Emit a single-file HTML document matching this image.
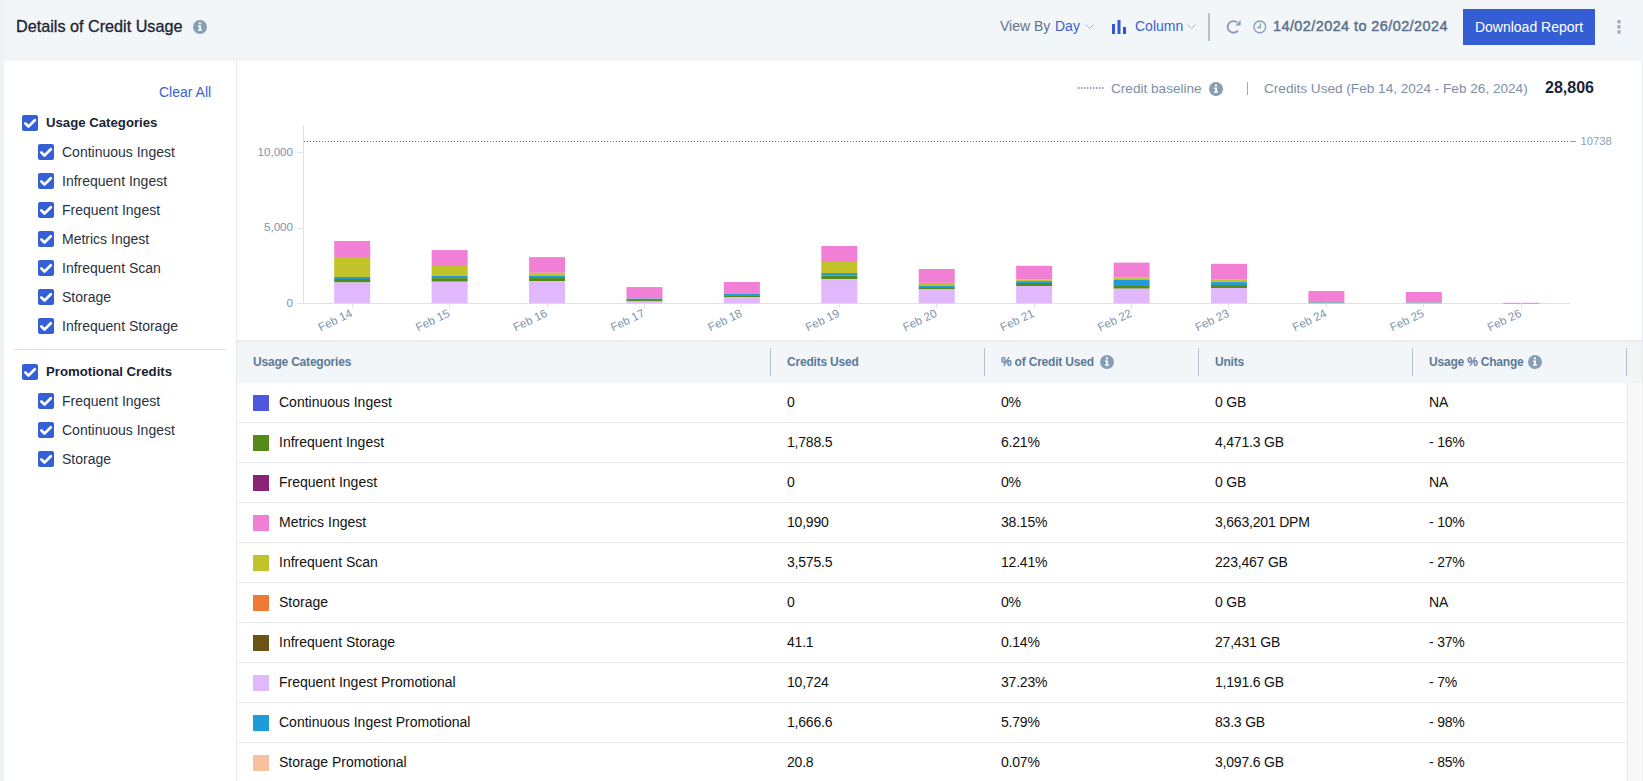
<!DOCTYPE html>
<html><head><meta charset="utf-8">
<style>
*{box-sizing:border-box;margin:0;padding:0}
html,body{width:1643px;height:781px;overflow:hidden;background:#fff;font-family:"Liberation Sans",sans-serif;position:relative}
.a{position:absolute}
.strip{left:0;top:0;width:4px;height:781px;background:#eef2f4}
.hdr{left:4px;top:0;width:1639px;height:57px;background:#f3f6f9}
.hband{left:4px;top:57px;width:1639px;height:4px;background:#f3f4f5}
.title{left:16px;top:16px;font-size:16.2px;color:#1b2333;-webkit-text-stroke:0.3px #1b2333;white-space:nowrap;line-height:20px}
.t14{font-size:14px;white-space:nowrap;line-height:16px}
.btn{left:1463px;top:9px;width:132px;height:36px;background:#355ed4;color:#fff;font-size:14px;line-height:36px;text-align:center}
.side{left:4px;top:61px;width:232px;height:720px;background:#fff}
.sideborder{left:236px;top:61px;width:1px;height:720px;background:#e6eaee}
.cb{width:16px;height:16px;background:#3560d5;border-radius:2px}
.cb svg{position:absolute;left:0;top:0}
.lbl{font-size:14px;color:#2a3240;white-space:nowrap;line-height:16px}
.lblb{font-size:13.2px;font-weight:bold;color:#1b2333;white-space:nowrap;line-height:16px}
.th{font-size:12px;font-weight:bold;color:#5b7a99;white-space:nowrap;line-height:16px;letter-spacing:-0.2px}
.td{font-size:14px;color:#111;white-space:nowrap;line-height:16px}
</style></head><body>
<div class="a strip"></div>
<div class="a hdr"></div>
<div class="a hband"></div>
<div class="a title">Details of Credit Usage</div>
<svg class="a" style="left:193px;top:20px" width="14" height="14" viewBox="0 0 14 14"><circle cx="7" cy="7" r="7" fill="#889db6"/><path d="M5 5.5 H8 V9.2 H8.9 V10.7 H5 V9.2 H6.2 V6.9 H5 Z" fill="#fff"/><circle cx="6.9" cy="3.4" r="1.15" fill="#fff"/></svg>

<!-- toolbar -->
<div class="a t14" style="left:1000px;top:18px;color:#5f7388">View By</div>
<div class="a t14" style="left:1055px;top:18px;color:#3a5fd6">Day</div>
<svg class="a" style="left:1085px;top:24px" width="9" height="6" viewBox="0 0 9 6"><path d="M0.5 0.5 L4.5 4.5 L8.5 0.5" stroke="#a9b6c4" fill="none" stroke-width="1"/></svg>
<svg class="a" style="left:1112px;top:20px" width="14" height="14" viewBox="0 0 14 14"><rect x="0" y="4" width="3" height="10" fill="#3358d4"/><rect x="5.5" y="0" width="3" height="14" fill="#3358d4"/><rect x="11" y="7" width="3" height="7" fill="#3358d4"/></svg>
<div class="a t14" style="left:1135px;top:18px;color:#3a5fd6">Column</div>
<svg class="a" style="left:1187px;top:24px" width="9" height="6" viewBox="0 0 9 6"><path d="M0.5 0.5 L4.5 4.5 L8.5 0.5" stroke="#a9b6c4" fill="none" stroke-width="1"/></svg>
<div class="a" style="left:1208px;top:13px;width:2px;height:28px;background:#b4c2d0"></div>
<svg class="a" style="left:1226px;top:19px" width="16" height="16" viewBox="0 0 16 16"><path d="M11.94 11.58 A5.8 5.8 0 1 1 11.3 3.6" stroke="#8a9db5" stroke-width="1.8" fill="none"/><path d="M14.6 1.1 L14.6 6.6 L9.4 6.6 Z" fill="#8a9db5"/></svg>
<svg class="a" style="left:1253px;top:20px" width="14" height="14" viewBox="0 0 14 14"><circle cx="6.8" cy="6.85" r="5.9" stroke="#8a9db5" stroke-width="1.4" fill="none"/><path d="M7.4 3.3 V7.5 H4.2" stroke="#8a9db5" stroke-width="1.3" fill="none"/></svg>
<div class="a t14" style="left:1273px;top:18px;color:#5a7088;font-size:14.5px;letter-spacing:0.4px;-webkit-text-stroke:0.45px #5a7088">14/02/2024 to 26/02/2024</div>
<div class="a btn">Download Report</div>
<svg class="a" style="left:1616px;top:19px" width="6" height="16" viewBox="0 0 6 16"><circle cx="3" cy="2.7" r="1.9" fill="#9dafc0"/><circle cx="3" cy="7.8" r="1.9" fill="#9dafc0"/><circle cx="3" cy="13" r="1.9" fill="#9dafc0"/></svg>

<!-- sidebar -->
<div class="a side"></div>
<div class="a sideborder"></div>
<div class="a t14" style="left:159px;top:84px;color:#3a62d6">Clear All</div>
<div class="a cb" style="left:22px;top:115px"><svg width="16" height="16" viewBox="0 0 16 16"><path d="M3.4 8.5 L6.5 11.5 L12.8 5.2" stroke="#fff" stroke-width="2.7" fill="none" stroke-linecap="round" stroke-linejoin="round"/></svg></div>
<div class="a lblb" style="left:46px;top:115px">Usage Categories</div>
<div class="a cb" style="left:38px;top:144px"><svg width="16" height="16" viewBox="0 0 16 16"><path d="M3.4 8.5 L6.5 11.5 L12.8 5.2" stroke="#fff" stroke-width="2.7" fill="none" stroke-linecap="round" stroke-linejoin="round"/></svg></div>
<div class="a lbl" style="left:62px;top:144px">Continuous Ingest</div>
<div class="a cb" style="left:38px;top:173px"><svg width="16" height="16" viewBox="0 0 16 16"><path d="M3.4 8.5 L6.5 11.5 L12.8 5.2" stroke="#fff" stroke-width="2.7" fill="none" stroke-linecap="round" stroke-linejoin="round"/></svg></div>
<div class="a lbl" style="left:62px;top:173px">Infrequent Ingest</div>
<div class="a cb" style="left:38px;top:202px"><svg width="16" height="16" viewBox="0 0 16 16"><path d="M3.4 8.5 L6.5 11.5 L12.8 5.2" stroke="#fff" stroke-width="2.7" fill="none" stroke-linecap="round" stroke-linejoin="round"/></svg></div>
<div class="a lbl" style="left:62px;top:202px">Frequent Ingest</div>
<div class="a cb" style="left:38px;top:231px"><svg width="16" height="16" viewBox="0 0 16 16"><path d="M3.4 8.5 L6.5 11.5 L12.8 5.2" stroke="#fff" stroke-width="2.7" fill="none" stroke-linecap="round" stroke-linejoin="round"/></svg></div>
<div class="a lbl" style="left:62px;top:231px">Metrics Ingest</div>
<div class="a cb" style="left:38px;top:260px"><svg width="16" height="16" viewBox="0 0 16 16"><path d="M3.4 8.5 L6.5 11.5 L12.8 5.2" stroke="#fff" stroke-width="2.7" fill="none" stroke-linecap="round" stroke-linejoin="round"/></svg></div>
<div class="a lbl" style="left:62px;top:260px">Infrequent Scan</div>
<div class="a cb" style="left:38px;top:289px"><svg width="16" height="16" viewBox="0 0 16 16"><path d="M3.4 8.5 L6.5 11.5 L12.8 5.2" stroke="#fff" stroke-width="2.7" fill="none" stroke-linecap="round" stroke-linejoin="round"/></svg></div>
<div class="a lbl" style="left:62px;top:289px">Storage</div>
<div class="a cb" style="left:38px;top:318px"><svg width="16" height="16" viewBox="0 0 16 16"><path d="M3.4 8.5 L6.5 11.5 L12.8 5.2" stroke="#fff" stroke-width="2.7" fill="none" stroke-linecap="round" stroke-linejoin="round"/></svg></div>
<div class="a lbl" style="left:62px;top:318px">Infrequent Storage</div>
<div class="a" style="left:14px;top:349px;width:212px;height:1px;background:#dde3ea"></div>
<div class="a cb" style="left:22px;top:364px"><svg width="16" height="16" viewBox="0 0 16 16"><path d="M3.4 8.5 L6.5 11.5 L12.8 5.2" stroke="#fff" stroke-width="2.7" fill="none" stroke-linecap="round" stroke-linejoin="round"/></svg></div>
<div class="a lblb" style="left:46px;top:364px">Promotional Credits</div>
<div class="a cb" style="left:38px;top:393px"><svg width="16" height="16" viewBox="0 0 16 16"><path d="M3.4 8.5 L6.5 11.5 L12.8 5.2" stroke="#fff" stroke-width="2.7" fill="none" stroke-linecap="round" stroke-linejoin="round"/></svg></div>
<div class="a lbl" style="left:62px;top:393px">Frequent Ingest</div>
<div class="a cb" style="left:38px;top:422px"><svg width="16" height="16" viewBox="0 0 16 16"><path d="M3.4 8.5 L6.5 11.5 L12.8 5.2" stroke="#fff" stroke-width="2.7" fill="none" stroke-linecap="round" stroke-linejoin="round"/></svg></div>
<div class="a lbl" style="left:62px;top:422px">Continuous Ingest</div>
<div class="a cb" style="left:38px;top:451px"><svg width="16" height="16" viewBox="0 0 16 16"><path d="M3.4 8.5 L6.5 11.5 L12.8 5.2" stroke="#fff" stroke-width="2.7" fill="none" stroke-linecap="round" stroke-linejoin="round"/></svg></div>
<div class="a lbl" style="left:62px;top:451px">Storage</div>
<svg class="a" style="left:0;top:0" width="1643" height="781" viewBox="0 0 1643 781" shape-rendering="crispEdges">
<rect x="303" y="125" width="1" height="178.5" fill="#dde3ea"/>
<rect x="298" y="302.8" width="1272" height="1" fill="#dde3ea"/>
<rect x="298" y="152.0" width="5" height="1" fill="#dde3ea"/>
<rect x="298" y="227.5" width="5" height="1" fill="#dde3ea"/>
<rect x="334.21" y="241.00" width="36" height="16.00" fill="#f27fd6" shape-rendering="auto"/>
<rect x="334.21" y="257.00" width="36" height="20.00" fill="#c2c22b" shape-rendering="auto"/>
<rect x="334.21" y="277.00" width="36" height="2.00" fill="#1f9bd7" shape-rendering="auto"/>
<rect x="334.21" y="279.00" width="36" height="3.40" fill="#558b1a" shape-rendering="auto"/>
<rect x="334.21" y="282.40" width="36" height="20.90" fill="#e0b8fb" shape-rendering="auto"/>
<rect x="351.71" y="303.3" width="1" height="4.5" fill="#dde3ea"/>
<text x="353.21" y="316" transform="rotate(-25.5 353.21 316)" text-anchor="end" font-size="11.6" fill="#7d93ad" font-family="Liberation Sans">Feb 14</text>
<rect x="431.63" y="250.10" width="36" height="15.90" fill="#f27fd6" shape-rendering="auto"/>
<rect x="431.63" y="266.00" width="36" height="9.80" fill="#c2c22b" shape-rendering="auto"/>
<rect x="431.63" y="275.80" width="36" height="2.30" fill="#1f9bd7" shape-rendering="auto"/>
<rect x="431.63" y="278.10" width="36" height="3.60" fill="#558b1a" shape-rendering="auto"/>
<rect x="431.63" y="281.70" width="36" height="21.60" fill="#e0b8fb" shape-rendering="auto"/>
<rect x="449.13" y="303.3" width="1" height="4.5" fill="#dde3ea"/>
<text x="450.63" y="316" transform="rotate(-25.5 450.63 316)" text-anchor="end" font-size="11.6" fill="#7d93ad" font-family="Liberation Sans">Feb 15</text>
<rect x="529.05" y="257.10" width="36" height="15.70" fill="#f27fd6" shape-rendering="auto"/>
<rect x="529.05" y="272.80" width="36" height="3.20" fill="#c2c22b" shape-rendering="auto"/>
<rect x="529.05" y="276.00" width="36" height="2.00" fill="#1f9bd7" shape-rendering="auto"/>
<rect x="529.05" y="278.00" width="36" height="3.30" fill="#558b1a" shape-rendering="auto"/>
<rect x="529.05" y="281.30" width="36" height="22.00" fill="#e0b8fb" shape-rendering="auto"/>
<rect x="546.55" y="303.3" width="1" height="4.5" fill="#dde3ea"/>
<text x="548.05" y="316" transform="rotate(-25.5 548.05 316)" text-anchor="end" font-size="11.6" fill="#7d93ad" font-family="Liberation Sans">Feb 16</text>
<rect x="626.47" y="287.10" width="36" height="11.50" fill="#f27fd6" shape-rendering="auto"/>
<rect x="626.47" y="298.60" width="36" height="1.40" fill="#1f9bd7" shape-rendering="auto"/>
<rect x="626.47" y="300.00" width="36" height="1.00" fill="#558b1a" shape-rendering="auto"/>
<rect x="626.47" y="301.00" width="36" height="2.30" fill="#e0b8fb" shape-rendering="auto"/>
<rect x="643.97" y="303.3" width="1" height="4.5" fill="#dde3ea"/>
<text x="645.47" y="316" transform="rotate(-25.5 645.47 316)" text-anchor="end" font-size="11.6" fill="#7d93ad" font-family="Liberation Sans">Feb 17</text>
<rect x="723.89" y="282.00" width="36" height="11.70" fill="#f27fd6" shape-rendering="auto"/>
<rect x="723.89" y="293.70" width="36" height="1.50" fill="#1f9bd7" shape-rendering="auto"/>
<rect x="723.89" y="295.20" width="36" height="1.80" fill="#558b1a" shape-rendering="auto"/>
<rect x="723.89" y="297.00" width="36" height="6.30" fill="#e0b8fb" shape-rendering="auto"/>
<rect x="741.39" y="303.3" width="1" height="4.5" fill="#dde3ea"/>
<text x="742.89" y="316" transform="rotate(-25.5 742.89 316)" text-anchor="end" font-size="11.6" fill="#7d93ad" font-family="Liberation Sans">Feb 18</text>
<rect x="821.31" y="246.00" width="36" height="16.00" fill="#f27fd6" shape-rendering="auto"/>
<rect x="821.31" y="262.00" width="36" height="11.00" fill="#c2c22b" shape-rendering="auto"/>
<rect x="821.31" y="273.00" width="36" height="2.60" fill="#1f9bd7" shape-rendering="auto"/>
<rect x="821.31" y="275.60" width="36" height="3.40" fill="#558b1a" shape-rendering="auto"/>
<rect x="821.31" y="279.00" width="36" height="24.30" fill="#e0b8fb" shape-rendering="auto"/>
<rect x="838.81" y="303.3" width="1" height="4.5" fill="#dde3ea"/>
<text x="840.31" y="316" transform="rotate(-25.5 840.31 316)" text-anchor="end" font-size="11.6" fill="#7d93ad" font-family="Liberation Sans">Feb 19</text>
<rect x="918.73" y="269.00" width="36" height="13.90" fill="#f27fd6" shape-rendering="auto"/>
<rect x="918.73" y="282.90" width="36" height="2.90" fill="#c2c22b" shape-rendering="auto"/>
<rect x="918.73" y="285.80" width="36" height="1.30" fill="#1f9bd7" shape-rendering="auto"/>
<rect x="918.73" y="287.10" width="36" height="2.30" fill="#558b1a" shape-rendering="auto"/>
<rect x="918.73" y="289.40" width="36" height="13.90" fill="#e0b8fb" shape-rendering="auto"/>
<rect x="936.23" y="303.3" width="1" height="4.5" fill="#dde3ea"/>
<text x="937.73" y="316" transform="rotate(-25.5 937.73 316)" text-anchor="end" font-size="11.6" fill="#7d93ad" font-family="Liberation Sans">Feb 20</text>
<rect x="1016.15" y="265.80" width="36" height="13.50" fill="#f27fd6" shape-rendering="auto"/>
<rect x="1016.15" y="279.30" width="36" height="1.90" fill="#c2c22b" shape-rendering="auto"/>
<rect x="1016.15" y="281.20" width="36" height="1.80" fill="#1f9bd7" shape-rendering="auto"/>
<rect x="1016.15" y="283.00" width="36" height="3.00" fill="#558b1a" shape-rendering="auto"/>
<rect x="1016.15" y="286.00" width="36" height="17.30" fill="#e0b8fb" shape-rendering="auto"/>
<rect x="1033.65" y="303.3" width="1" height="4.5" fill="#dde3ea"/>
<text x="1035.15" y="316" transform="rotate(-25.5 1035.15 316)" text-anchor="end" font-size="11.6" fill="#7d93ad" font-family="Liberation Sans">Feb 21</text>
<rect x="1113.57" y="262.60" width="36" height="14.80" fill="#f27fd6" shape-rendering="auto"/>
<rect x="1113.57" y="277.40" width="36" height="2.60" fill="#c2c22b" shape-rendering="auto"/>
<rect x="1113.57" y="280.00" width="36" height="6.00" fill="#1f9bd7" shape-rendering="auto"/>
<rect x="1113.57" y="286.00" width="36" height="2.70" fill="#558b1a" shape-rendering="auto"/>
<rect x="1113.57" y="288.70" width="36" height="14.60" fill="#e0b8fb" shape-rendering="auto"/>
<rect x="1131.07" y="303.3" width="1" height="4.5" fill="#dde3ea"/>
<text x="1132.57" y="316" transform="rotate(-25.5 1132.57 316)" text-anchor="end" font-size="11.6" fill="#7d93ad" font-family="Liberation Sans">Feb 22</text>
<rect x="1210.99" y="263.80" width="36" height="15.40" fill="#f27fd6" shape-rendering="auto"/>
<rect x="1210.99" y="279.20" width="36" height="2.90" fill="#c2c22b" shape-rendering="auto"/>
<rect x="1210.99" y="282.10" width="36" height="2.80" fill="#1f9bd7" shape-rendering="auto"/>
<rect x="1210.99" y="284.90" width="36" height="3.10" fill="#558b1a" shape-rendering="auto"/>
<rect x="1210.99" y="288.00" width="36" height="15.30" fill="#e0b8fb" shape-rendering="auto"/>
<rect x="1228.49" y="303.3" width="1" height="4.5" fill="#dde3ea"/>
<text x="1229.99" y="316" transform="rotate(-25.5 1229.99 316)" text-anchor="end" font-size="11.6" fill="#7d93ad" font-family="Liberation Sans">Feb 23</text>
<rect x="1308.41" y="291.00" width="36" height="11.20" fill="#f27fd6" shape-rendering="auto"/>
<rect x="1308.41" y="302.20" width="36" height="1.10" fill="#6fa8a6" shape-rendering="auto"/>
<rect x="1325.91" y="303.3" width="1" height="4.5" fill="#dde3ea"/>
<text x="1327.41" y="316" transform="rotate(-25.5 1327.41 316)" text-anchor="end" font-size="11.6" fill="#7d93ad" font-family="Liberation Sans">Feb 24</text>
<rect x="1405.83" y="292.00" width="36" height="10.50" fill="#f27fd6" shape-rendering="auto"/>
<rect x="1405.83" y="302.50" width="36" height="0.80" fill="#6fa8a6" shape-rendering="auto"/>
<rect x="1423.33" y="303.3" width="1" height="4.5" fill="#dde3ea"/>
<text x="1424.83" y="316" transform="rotate(-25.5 1424.83 316)" text-anchor="end" font-size="11.6" fill="#7d93ad" font-family="Liberation Sans">Feb 25</text>
<rect x="1503.25" y="302.80" width="36" height="1.00" fill="#f27fd6" shape-rendering="auto"/>
<rect x="1520.75" y="303.3" width="1" height="4.5" fill="#dde3ea"/>
<text x="1522.25" y="316" transform="rotate(-25.5 1522.25 316)" text-anchor="end" font-size="11.6" fill="#7d93ad" font-family="Liberation Sans">Feb 26</text>
<line x1="304" y1="141.5" x2="1570" y2="141.5" stroke="#5f6f85" stroke-width="1" stroke-dasharray="1 2" shape-rendering="auto"/>
<rect x="1570" y="141" width="6" height="1" fill="#8ea0b5"/>
<text x="1580.5" y="144.6" font-size="11.2" fill="#8ea0b5" font-family="Liberation Sans">10738</text>
<text x="293" y="155.8" text-anchor="end" font-size="11.6" fill="#7d93ad" font-family="Liberation Sans">10,000</text>
<text x="293" y="231.3" text-anchor="end" font-size="11.6" fill="#7d93ad" font-family="Liberation Sans">5,000</text>
<text x="293" y="306.5" text-anchor="end" font-size="11.6" fill="#7d93ad" font-family="Liberation Sans">0</text>
</svg>
<svg class="a" style="left:1078px;top:87px" width="26" height="2"><line x1="0" y1="1" x2="26" y2="1" stroke="#6f7f95" stroke-dasharray="1.5 1.5" stroke-width="1.4"/></svg>
<div class="a" style="left:1111px;top:81px;font-size:13.6px;color:#7d8fa6;white-space:nowrap;line-height:16px">Credit baseline</div>
<svg class="a" style="left:1209px;top:82px" width="14" height="14" viewBox="0 0 14 14"><circle cx="7" cy="7" r="7" fill="#889db6"/><path d="M5 5.5 H8 V9.2 H8.9 V10.7 H5 V9.2 H6.2 V6.9 H5 Z" fill="#fff"/><circle cx="6.9" cy="3.4" r="1.15" fill="#fff"/></svg>
<div class="a" style="left:1246.5px;top:82px;width:1.2px;height:13px;background:#9aabbd"></div>
<div class="a" style="left:1264px;top:81px;font-size:13.6px;color:#7d8fa6;white-space:nowrap;line-height:16px">Credits Used (Feb 14, 2024 - Feb 26, 2024)</div>
<div class="a" style="left:1545px;top:79px;font-size:16px;font-weight:bold;color:#1b2333;white-space:nowrap;line-height:18px">28,806</div>
<div class="a" style="left:237px;top:340px;width:1405px;height:2px;background:#e8ecf0"></div>
<div class="a" style="left:237px;top:342px;width:1390px;height:41px;background:#f3f6f9"></div>
<div class="a" style="left:770px;top:348px;width:1px;height:28px;background:#b3c2d0"></div>
<div class="a" style="left:984px;top:348px;width:1px;height:28px;background:#b3c2d0"></div>
<div class="a" style="left:1198px;top:348px;width:1px;height:28px;background:#b3c2d0"></div>
<div class="a" style="left:1412px;top:348px;width:1px;height:28px;background:#b3c2d0"></div>
<div class="a" style="left:1626px;top:348px;width:1px;height:28px;background:#b3c2d0"></div>
<div class="a th" style="left:253px;top:354px">Usage Categories</div>
<div class="a th" style="left:787px;top:354px">Credits Used</div>
<div class="a th" style="left:1001px;top:354px">% of Credit Used</div>
<div class="a th" style="left:1215px;top:354px">Units</div>
<div class="a th" style="left:1429px;top:354px">Usage % Change</div>
<svg class="a" style="left:1100px;top:355px" width="14" height="14" viewBox="0 0 14 14"><circle cx="7" cy="7" r="7" fill="#889db6"/><path d="M5 5.5 H8 V9.2 H8.9 V10.7 H5 V9.2 H6.2 V6.9 H5 Z" fill="#fff"/><circle cx="6.9" cy="3.4" r="1.15" fill="#fff"/></svg>
<svg class="a" style="left:1528px;top:355px" width="14" height="14" viewBox="0 0 14 14"><circle cx="7" cy="7" r="7" fill="#889db6"/><path d="M5 5.5 H8 V9.2 H8.9 V10.7 H5 V9.2 H6.2 V6.9 H5 Z" fill="#fff"/><circle cx="6.9" cy="3.4" r="1.15" fill="#fff"/></svg>
<div class="a" style="left:253px;top:395px;width:16px;height:16px;background:#4f58dc"></div>
<div class="a td" style="left:279px;top:394px">Continuous Ingest</div>
<div class="a td" style="left:787px;top:394px;letter-spacing:-0.2px">0</div>
<div class="a td" style="left:1001px;top:394px;letter-spacing:-0.2px">0%</div>
<div class="a td" style="left:1215px;top:394px;letter-spacing:-0.2px">0 GB</div>
<div class="a td" style="left:1429px;top:394px;letter-spacing:-0.2px">NA</div>
<div class="a" style="left:237px;top:422px;width:1390px;height:1px;background:#e6eaee"></div>
<div class="a" style="left:253px;top:435px;width:16px;height:16px;background:#558a1a"></div>
<div class="a td" style="left:279px;top:434px">Infrequent Ingest</div>
<div class="a td" style="left:787px;top:434px;letter-spacing:-0.2px">1,788.5</div>
<div class="a td" style="left:1001px;top:434px;letter-spacing:-0.2px">6.21%</div>
<div class="a td" style="left:1215px;top:434px;letter-spacing:-0.2px">4,471.3 GB</div>
<div class="a td" style="left:1429px;top:434px;letter-spacing:-0.2px">- 16%</div>
<div class="a" style="left:237px;top:462px;width:1390px;height:1px;background:#e6eaee"></div>
<div class="a" style="left:253px;top:475px;width:16px;height:16px;background:#8a2275"></div>
<div class="a td" style="left:279px;top:474px">Frequent Ingest</div>
<div class="a td" style="left:787px;top:474px;letter-spacing:-0.2px">0</div>
<div class="a td" style="left:1001px;top:474px;letter-spacing:-0.2px">0%</div>
<div class="a td" style="left:1215px;top:474px;letter-spacing:-0.2px">0 GB</div>
<div class="a td" style="left:1429px;top:474px;letter-spacing:-0.2px">NA</div>
<div class="a" style="left:237px;top:502px;width:1390px;height:1px;background:#e6eaee"></div>
<div class="a" style="left:253px;top:515px;width:16px;height:16px;background:#f27fd6"></div>
<div class="a td" style="left:279px;top:514px">Metrics Ingest</div>
<div class="a td" style="left:787px;top:514px;letter-spacing:-0.2px">10,990</div>
<div class="a td" style="left:1001px;top:514px;letter-spacing:-0.2px">38.15%</div>
<div class="a td" style="left:1215px;top:514px;letter-spacing:-0.2px">3,663,201 DPM</div>
<div class="a td" style="left:1429px;top:514px;letter-spacing:-0.2px">- 10%</div>
<div class="a" style="left:237px;top:542px;width:1390px;height:1px;background:#e6eaee"></div>
<div class="a" style="left:253px;top:555px;width:16px;height:16px;background:#c2c22b"></div>
<div class="a td" style="left:279px;top:554px">Infrequent Scan</div>
<div class="a td" style="left:787px;top:554px;letter-spacing:-0.2px">3,575.5</div>
<div class="a td" style="left:1001px;top:554px;letter-spacing:-0.2px">12.41%</div>
<div class="a td" style="left:1215px;top:554px;letter-spacing:-0.2px">223,467 GB</div>
<div class="a td" style="left:1429px;top:554px;letter-spacing:-0.2px">- 27%</div>
<div class="a" style="left:237px;top:582px;width:1390px;height:1px;background:#e6eaee"></div>
<div class="a" style="left:253px;top:595px;width:16px;height:16px;background:#f07a35"></div>
<div class="a td" style="left:279px;top:594px">Storage</div>
<div class="a td" style="left:787px;top:594px;letter-spacing:-0.2px">0</div>
<div class="a td" style="left:1001px;top:594px;letter-spacing:-0.2px">0%</div>
<div class="a td" style="left:1215px;top:594px;letter-spacing:-0.2px">0 GB</div>
<div class="a td" style="left:1429px;top:594px;letter-spacing:-0.2px">NA</div>
<div class="a" style="left:237px;top:622px;width:1390px;height:1px;background:#e6eaee"></div>
<div class="a" style="left:253px;top:635px;width:16px;height:16px;background:#6b5416"></div>
<div class="a td" style="left:279px;top:634px">Infrequent Storage</div>
<div class="a td" style="left:787px;top:634px;letter-spacing:-0.2px">41.1</div>
<div class="a td" style="left:1001px;top:634px;letter-spacing:-0.2px">0.14%</div>
<div class="a td" style="left:1215px;top:634px;letter-spacing:-0.2px">27,431 GB</div>
<div class="a td" style="left:1429px;top:634px;letter-spacing:-0.2px">- 37%</div>
<div class="a" style="left:237px;top:662px;width:1390px;height:1px;background:#e6eaee"></div>
<div class="a" style="left:253px;top:675px;width:16px;height:16px;background:#e0b8fb"></div>
<div class="a td" style="left:279px;top:674px">Frequent Ingest Promotional</div>
<div class="a td" style="left:787px;top:674px;letter-spacing:-0.2px">10,724</div>
<div class="a td" style="left:1001px;top:674px;letter-spacing:-0.2px">37.23%</div>
<div class="a td" style="left:1215px;top:674px;letter-spacing:-0.2px">1,191.6 GB</div>
<div class="a td" style="left:1429px;top:674px;letter-spacing:-0.2px">- 7%</div>
<div class="a" style="left:237px;top:702px;width:1390px;height:1px;background:#e6eaee"></div>
<div class="a" style="left:253px;top:715px;width:16px;height:16px;background:#1f9bd7"></div>
<div class="a td" style="left:279px;top:714px">Continuous Ingest Promotional</div>
<div class="a td" style="left:787px;top:714px;letter-spacing:-0.2px">1,666.6</div>
<div class="a td" style="left:1001px;top:714px;letter-spacing:-0.2px">5.79%</div>
<div class="a td" style="left:1215px;top:714px;letter-spacing:-0.2px">83.3 GB</div>
<div class="a td" style="left:1429px;top:714px;letter-spacing:-0.2px">- 98%</div>
<div class="a" style="left:237px;top:742px;width:1390px;height:1px;background:#e6eaee"></div>
<div class="a" style="left:253px;top:755px;width:16px;height:16px;background:#f8c19e"></div>
<div class="a td" style="left:279px;top:754px">Storage Promotional</div>
<div class="a td" style="left:787px;top:754px;letter-spacing:-0.2px">20.8</div>
<div class="a td" style="left:1001px;top:754px;letter-spacing:-0.2px">0.07%</div>
<div class="a td" style="left:1215px;top:754px;letter-spacing:-0.2px">3,097.6 GB</div>
<div class="a td" style="left:1429px;top:754px;letter-spacing:-0.2px">- 85%</div>
<div class="a" style="left:1627px;top:383px;width:1px;height:398px;background:#e8e8e8"></div>
<div class="a" style="left:1628px;top:383px;width:13px;height:398px;background:#f8f8f8"></div>
<div class="a" style="left:1627px;top:342px;width:15px;height:41px;background:#f3f4f4"></div>
<div class="a" style="left:1642px;top:61px;width:1px;height:720px;background:#e8ecf0"></div>
</body></html>
